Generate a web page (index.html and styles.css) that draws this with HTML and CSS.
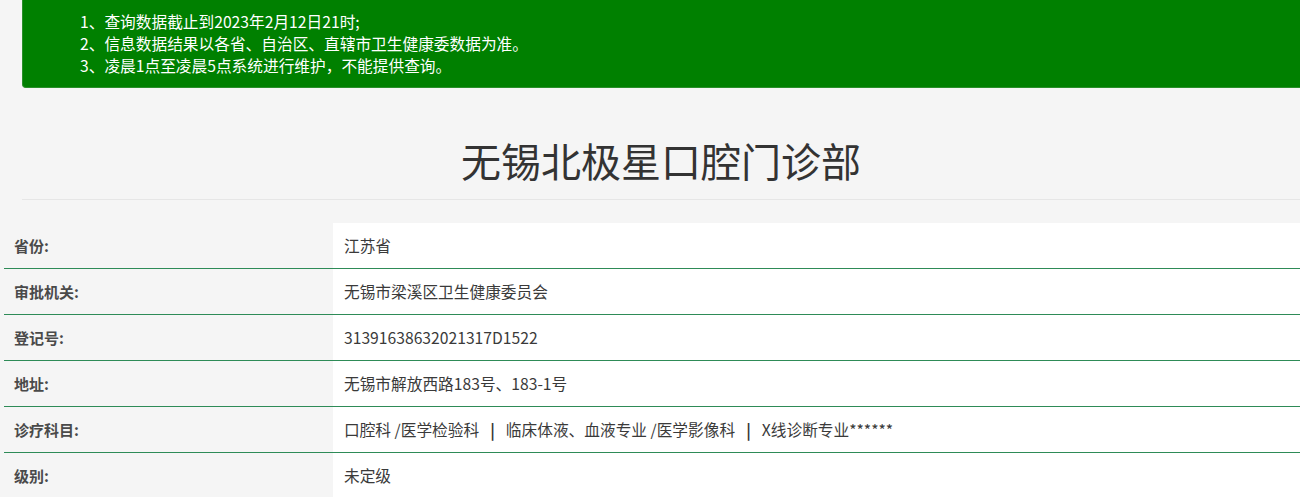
FILE: index.html
```html
<!DOCTYPE html>
<html lang="zh-CN">
<head>
<meta charset="utf-8">
<title>无锡北极星口腔门诊部</title>
<link rel="stylesheet" href="styles.css">
</head>
<body>
<div class="top">
  <div class="alert">
    <p>1、查询数据截止到2023年2月12日21时;</p>
    <p>2、信息数据结果以各省、自治区、直辖市卫生健康委数据为准。</p>
    <p>3、凌晨1点至凌晨5点系统进行维护，不能提供查询。</p>
  </div>
  <h1 class="title">无锡北极星口腔门诊部</h1>
  <div class="sep"></div>
</div>
<div class="info">
  <div class="row"><div class="label">省份:</div><div class="value">江苏省</div></div>
  <div class="row"><div class="label">审批机关:</div><div class="value">无锡市梁溪区卫生健康委员会</div></div>
  <div class="row"><div class="label">登记号:</div><div class="value">31391638632021317D1522</div></div>
  <div class="row"><div class="label">地址:</div><div class="value">无锡市解放西路183号、183-1号</div></div>
  <div class="row"><div class="label">诊疗科目:</div><div class="value">口腔科 /医学检验科<span class="bar">|</span>临床体液、血液专业 /医学影像科<span class="bar">|</span>X线诊断专业******</div></div>
  <div class="row"><div class="label">级别:</div><div class="value">未定级</div></div>
</div>
</body>
</html>
```
FILE: styles.css
```css
html, body {
  margin: 0;
  padding: 0;
  background: #f5f5f5;
  overflow: hidden;
  font-family: "Noto Sans CJK SC", "Noto Sans", sans-serif;
  color: #333;
}

.top {
  padding-left: 22px;
}

.alert {
  background: #008000;
  border: 1px solid #2a8f2a;
  border-top: none;
  border-radius: 0 0 4px 4px;
  margin-right: -10px;
  height: 88px;
  box-sizing: border-box;
  padding: 11px 0 0 57px;
  color: #fff;
  font-size: 15.7px;
}

.alert p {
  margin: 0;
  line-height: 22px;
}

.title {
  margin: 48px 0 0;
  text-align: center;
  font-size: 40px;
  line-height: 48px;
  font-weight: normal;
  color: #333;
}

.sep {
  height: 1px;
  background: #e6e6e6;
  margin-top: 15px;
}

.info {
  margin: 23px 0 0 4px;
}

.row {
  display: grid;
  grid-template-columns: 329px 1fr;
  border-bottom: 1px solid #2e8b57;
  height: 46px;
  box-sizing: border-box;
}

.label {
  display: flex;
  align-items: center;
  padding-left: 10px;
  font-size: 15px;
  font-weight: bold;
  color: #4a4a4a;
}

.value {
  display: flex;
  align-items: center;
  padding-left: 11px;
  background: #fff;
  font-size: 15.7px;
  color: #3a3a3a;
  white-space: pre;
}

.bar {
  font-weight: bold;
  margin: 0 11px;
  color: #333;
}
```
